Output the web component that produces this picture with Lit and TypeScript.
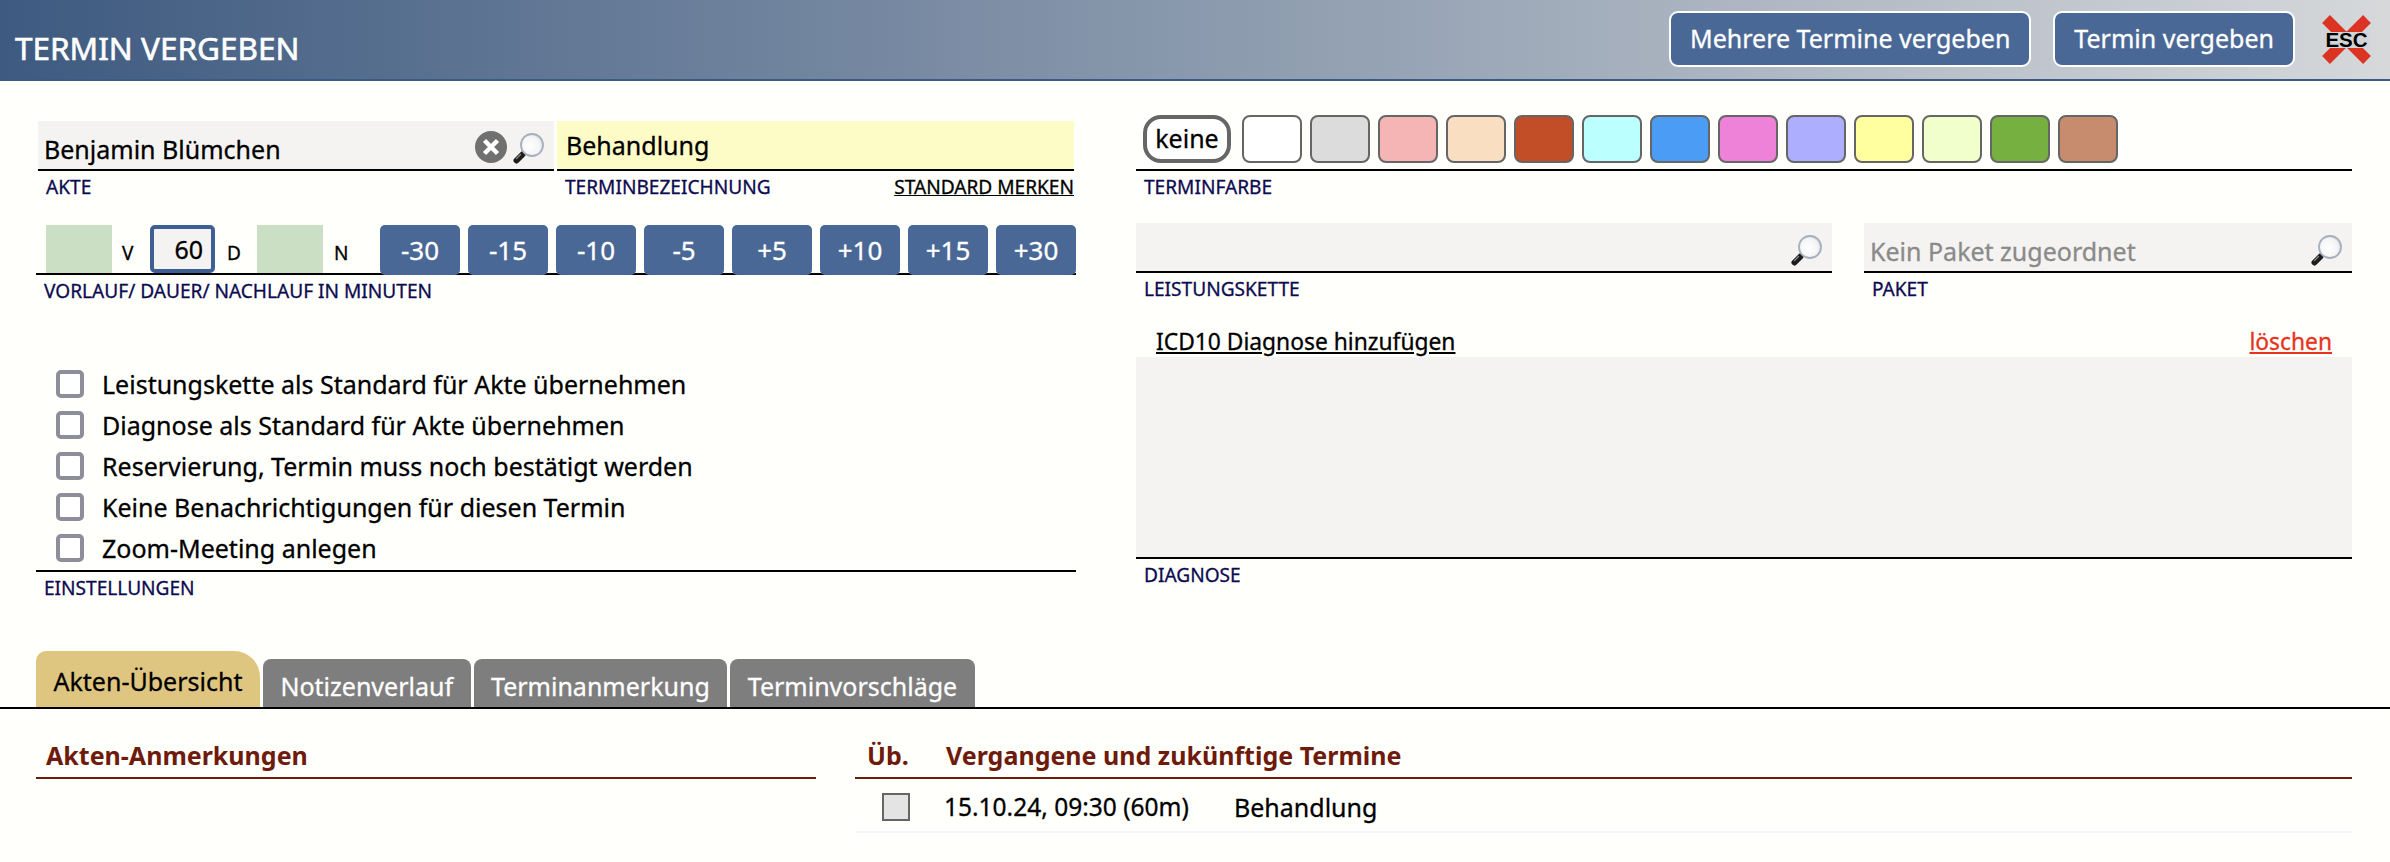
import { LitElement, html, css, svg } from "lit";
import { customElement } from "lit/decorators.js";

const glass = svg`<svg class="glass" viewBox="0 0 31 31" aria-hidden="true">
  <defs><radialGradient id="gl" cx="40%" cy="55%" r="70%"><stop offset="0" stop-color="#ffffff"/><stop offset=".65" stop-color="#f4f4f4"/><stop offset="1" stop-color="#c4ccd8"/></radialGradient></defs>
  <path d="M10 21 L13 18" stroke="#8a8f96" stroke-width="3"/>
  <path d="M3.5 27.5 L9.5 21.5" stroke="#1c1c1c" stroke-width="6" stroke-linecap="round"/>
  <path d="M3.5 25.5 L7.5 21.5" stroke="#8a8a8a" stroke-width="1.2" stroke-linecap="round"/>
  <circle cx="19" cy="12" r="11" fill="url(#gl)" stroke="#a5afbe" stroke-width="1.8"/>
</svg>`;

const swatches = ["#ffffff","#dcdcdc","#f5b5b5","#f9dec2","#c24e28","#bcffff","#4a9cf5","#ee82d8","#aeaeff","#ffffa0","#f0ffcc","#76b040","#c78c6e"];
const deltas = ["-30","-15","-10","-5","+5","+10","+15","+30"];
const checks = ["Leistungskette als Standard für Akte übernehmen","Diagnose als Standard für Akte übernehmen","Reservierung, Termin muss noch bestätigt werden","Keine Benachrichtigungen für diesen Termin","Zoom-Meeting anlegen"];

@customElement("app-root")
export class AppRoot extends LitElement {
  static styles = css`
    :host { display:block; width:2390px; height:862px; overflow:hidden; background:#fffffb; color:#000;
      font-family:"Noto Sans",sans-serif; font-size:25px; -webkit-text-stroke:0.3px; }
    * { box-sizing:border-box; }
    .header { height:81px; border-bottom:2px solid #3c5a82; display:flex; align-items:flex-start;
      background:linear-gradient(90deg,#3e5a80 0%,#d6d8da 100%); }
    .title { color:#fff; font-size:31.5px; line-height:40px; padding:28px 0 0 15px; -webkit-text-stroke:0.6px; }
    .actions { margin-left:auto; display:flex; gap:22px; padding-top:11px; align-items:flex-start; }
    .hbtn { height:56px; border:2px solid #fff; border-radius:9px; background:#4a6896; color:#fff; font-size:25px;
      line-height:50px; padding:0 19px; }
    .esc { width:49px; height:49px; margin:15px 19px 0 27px; display:block; overflow:visible; flex:none; }
    .esc text { font:bold 20.5px "Liberation Sans",sans-serif; fill:#000; }
    .form { display:grid; grid-template-columns:1040px 1216px; column-gap:60px; padding:0 38px 0 36px; height:570px; }
    .left { padding-top:40px; display:flex; flex-direction:column; }
    .right { padding-top:34px; display:flex; flex-direction:column; }
    .pair { display:grid; grid-template-columns:516px 517px; column-gap:3px; padding-left:2px; }
    .box { height:50px; border-bottom:2px solid #000; background:#f4f3f1; display:flex; align-items:center; position:relative; }
    .box.yellow { background:#fefcc6; }
    .val { padding-left:6px; line-height:34px; }
    .val.name { padding-top:8px; }
    .val.sub { padding:0 0 0 9px; }
    .icons { margin-left:auto; display:flex; align-items:center; gap:6px; padding:6px 10px 0 0; }
    .glass { width:31px; height:31px; display:block; }
    .clear { width:32px; height:32px; border-radius:50%; background:#707070; color:#fff; display:flex; align-items:center; justify-content:center; margin-top:-2px; }
    .lab { font-size:19.1px; line-height:26px; color:#0c0a50; padding:3px 8px 0; display:flex; justify-content:space-between; text-transform:uppercase; height:30px; }
    .lab a { color:#000; text-decoration:underline; }
    .pair .lab { padding-right:0; }
    .dur { margin-top:24px; height:50px; display:flex; border-bottom:2px solid #000; padding-left:10px; }
    .green { width:66px; height:48px; background:#cadfc4; }
    .letter { font-size:19px; line-height:48px; padding:4px 0 0 10px; width:38px; }
    .letter.d { width:42px; padding-left:12px; }
    .letter.n { padding-left:11px; }
    .sixty { width:65px; height:48px; border:4px solid #3d5f94; border-radius:5px; background:#f4f3f1; text-align:right; padding-right:8px; line-height:40px; }
    .deltas { display:flex; gap:8px; margin-left:auto; }
    .delta { width:80px; height:50px; background:#4a6896; color:#fff; border-radius:5px; text-align:center; line-height:50px; font-size:26px; }
    .checks { margin-top:65px; display:flex; flex-direction:column; gap:13px; padding-left:20px; height:200px; }
    .chk { display:flex; align-items:center; height:28px; gap:18px; line-height:28px; }
    .cb { width:28px; height:28px; border:4px solid #8e8e9a; border-radius:5px; background:#fff; flex:none; }
    .settings { border-top:2px solid #000; }
    .swatches { height:56px; border-bottom:2px solid #000; display:flex; gap:8px; padding-left:7px; align-items:flex-start; }
    .keine { width:88px; height:48px; border:4px solid #666; border-radius:18px; background:#fff; text-align:center; line-height:38px; margin-right:3px; }
    .sw { width:60px; height:48px; border:2px solid #666; border-radius:8px; }
    .pair2 { display:grid; grid-template-columns:696px 488px; column-gap:32px; margin-top:22px; }
    .ph { color:#8a8a8a; padding:7px 0 0 6px; }
    .diagtop { margin-top:22px; height:32px; padding:0 20px; display:flex; justify-content:space-between; align-items:center; font-size:22.8px; }
    .diagtop a { text-decoration:underline; color:#000; }
    .diagtop a.del { color:#e8321e; }
    .diagbox { height:202px; background:#f4f3f1; border-bottom:2px solid #000; }
    .tabs { height:58px; border-bottom:2px solid #000; display:flex; align-items:flex-end; gap:3px; padding-left:36px; }
    .tab { height:48px; background:#7e7e7e; color:#fff; border-radius:8px 8px 0 0; padding:0 17.5px; line-height:54px; }
    .tab.on { height:56px; background:#dfc680; color:#000; border-radius:10px 26px 0 0; line-height:60px; }
    .bottom { display:grid; grid-template-columns:780px 1497px; column-gap:39px; padding:0 38px 0 36px; }
    .th { height:70px; border-bottom:2px solid #6e1a0c; color:#6e1a0c; font-weight:700; display:flex; align-items:flex-end; padding:0 0 5px 10px; line-height:34px; -webkit-text-stroke:0; }
    .th.wide { padding-left:12px; }
    .ub { width:79px; }
    .row { height:54px; border-bottom:2px solid #f2f5fc; display:flex; align-items:center; padding-top:3px; }
    .tick { width:28px; height:28px; border:2px solid #666; background:#e4e4e4; margin-left:27px; }
    .date { margin-left:34px; width:290px; font-size:24.5px; }
  `;
  render() {
    return html`
      <div class="header">
        <div class="title">TERMIN VERGEBEN</div>
        <div class="actions">
          <div class="hbtn">Mehrere Termine vergeben</div>
          <div class="hbtn">Termin vergeben</div>
        </div>
        <svg class="esc" viewBox="0 0 49 49" aria-hidden="true">
          <path d="M4 4 L45 45 M45 4 L4 45" stroke="#dc3422" stroke-width="11"/>
          <rect x="2" y="17" width="45" height="16" fill="#d2d4d6"/>
          <text x="24.5" y="32" text-anchor="middle">ESC</text>
        </svg>
      </div>
      <div class="form">
        <div class="left">
          <div class="pair">
            <div>
              <div class="box"><span class="val name">Benjamin Blümchen</span>
                <span class="icons">
                  <span class="clear"><svg width="20" height="20" viewBox="0 0 20 20"><path d="M3.5 3.5 L16.5 16.5 M16.5 3.5 L3.5 16.5" stroke="#fff" stroke-width="4.5"/></svg></span>
                  ${glass}
                </span>
              </div>
              <div class="lab"><span>Akte</span></div>
            </div>
            <div>
              <div class="box yellow"><span class="val sub">Behandlung</span></div>
              <div class="lab"><span>Terminbezeichnung</span><a>Standard merken</a></div>
            </div>
          </div>
          <div class="dur">
            <div class="green"></div><div class="letter">V</div>
            <div class="sixty">60</div><div class="letter d">D</div>
            <div class="green"></div><div class="letter n">N</div>
            <div class="deltas">${deltas.map((d) => html`<div class="delta">${d}</div>`)}</div>
          </div>
          <div class="lab"><span>Vorlauf/ Dauer/ Nachlauf in Minuten</span></div>
          <div class="checks">
            ${checks.map((c) => html`<div class="chk"><span class="cb"></span><span>${c}</span></div>`)}
          </div>
          <div class="lab settings"><span>Einstellungen</span></div>
        </div>
        <div class="right">
          <div class="swatches">
            <div class="keine">keine</div>
            ${swatches.map((c) => html`<div class="sw" style="background:${c}"></div>`)}
          </div>
          <div class="lab"><span>Terminfarbe</span></div>
          <div class="pair2">
            <div>
              <div class="box"><span class="icons">${glass}</span></div>
              <div class="lab"><span>Leistungskette</span></div>
            </div>
            <div>
              <div class="box"><span class="val ph">Kein Paket zugeordnet</span><span class="icons">${glass}</span></div>
              <div class="lab"><span>Paket</span></div>
            </div>
          </div>
          <div class="diagtop"><a>ICD10 Diagnose hinzufügen</a><a class="del">löschen</a></div>
          <div class="diagbox"></div>
          <div class="lab"><span>Diagnose</span></div>
        </div>
      </div>
      <div class="tabs">
        <div class="tab on">Akten-Übersicht</div>
        <div class="tab">Notizenverlauf</div>
        <div class="tab">Terminanmerkung</div>
        <div class="tab">Terminvorschläge</div>
      </div>
      <div class="bottom">
        <div><div class="th">Akten-Anmerkungen</div></div>
        <div>
          <div class="th wide"><span class="ub">Üb.</span><span>Vergangene und zukünftige Termine</span></div>
          <div class="row"><span class="tick"></span><span class="date">15.10.24, 09:30 (60m)</span><span>Behandlung</span></div>
        </div>
      </div>
    `;
  }
}
